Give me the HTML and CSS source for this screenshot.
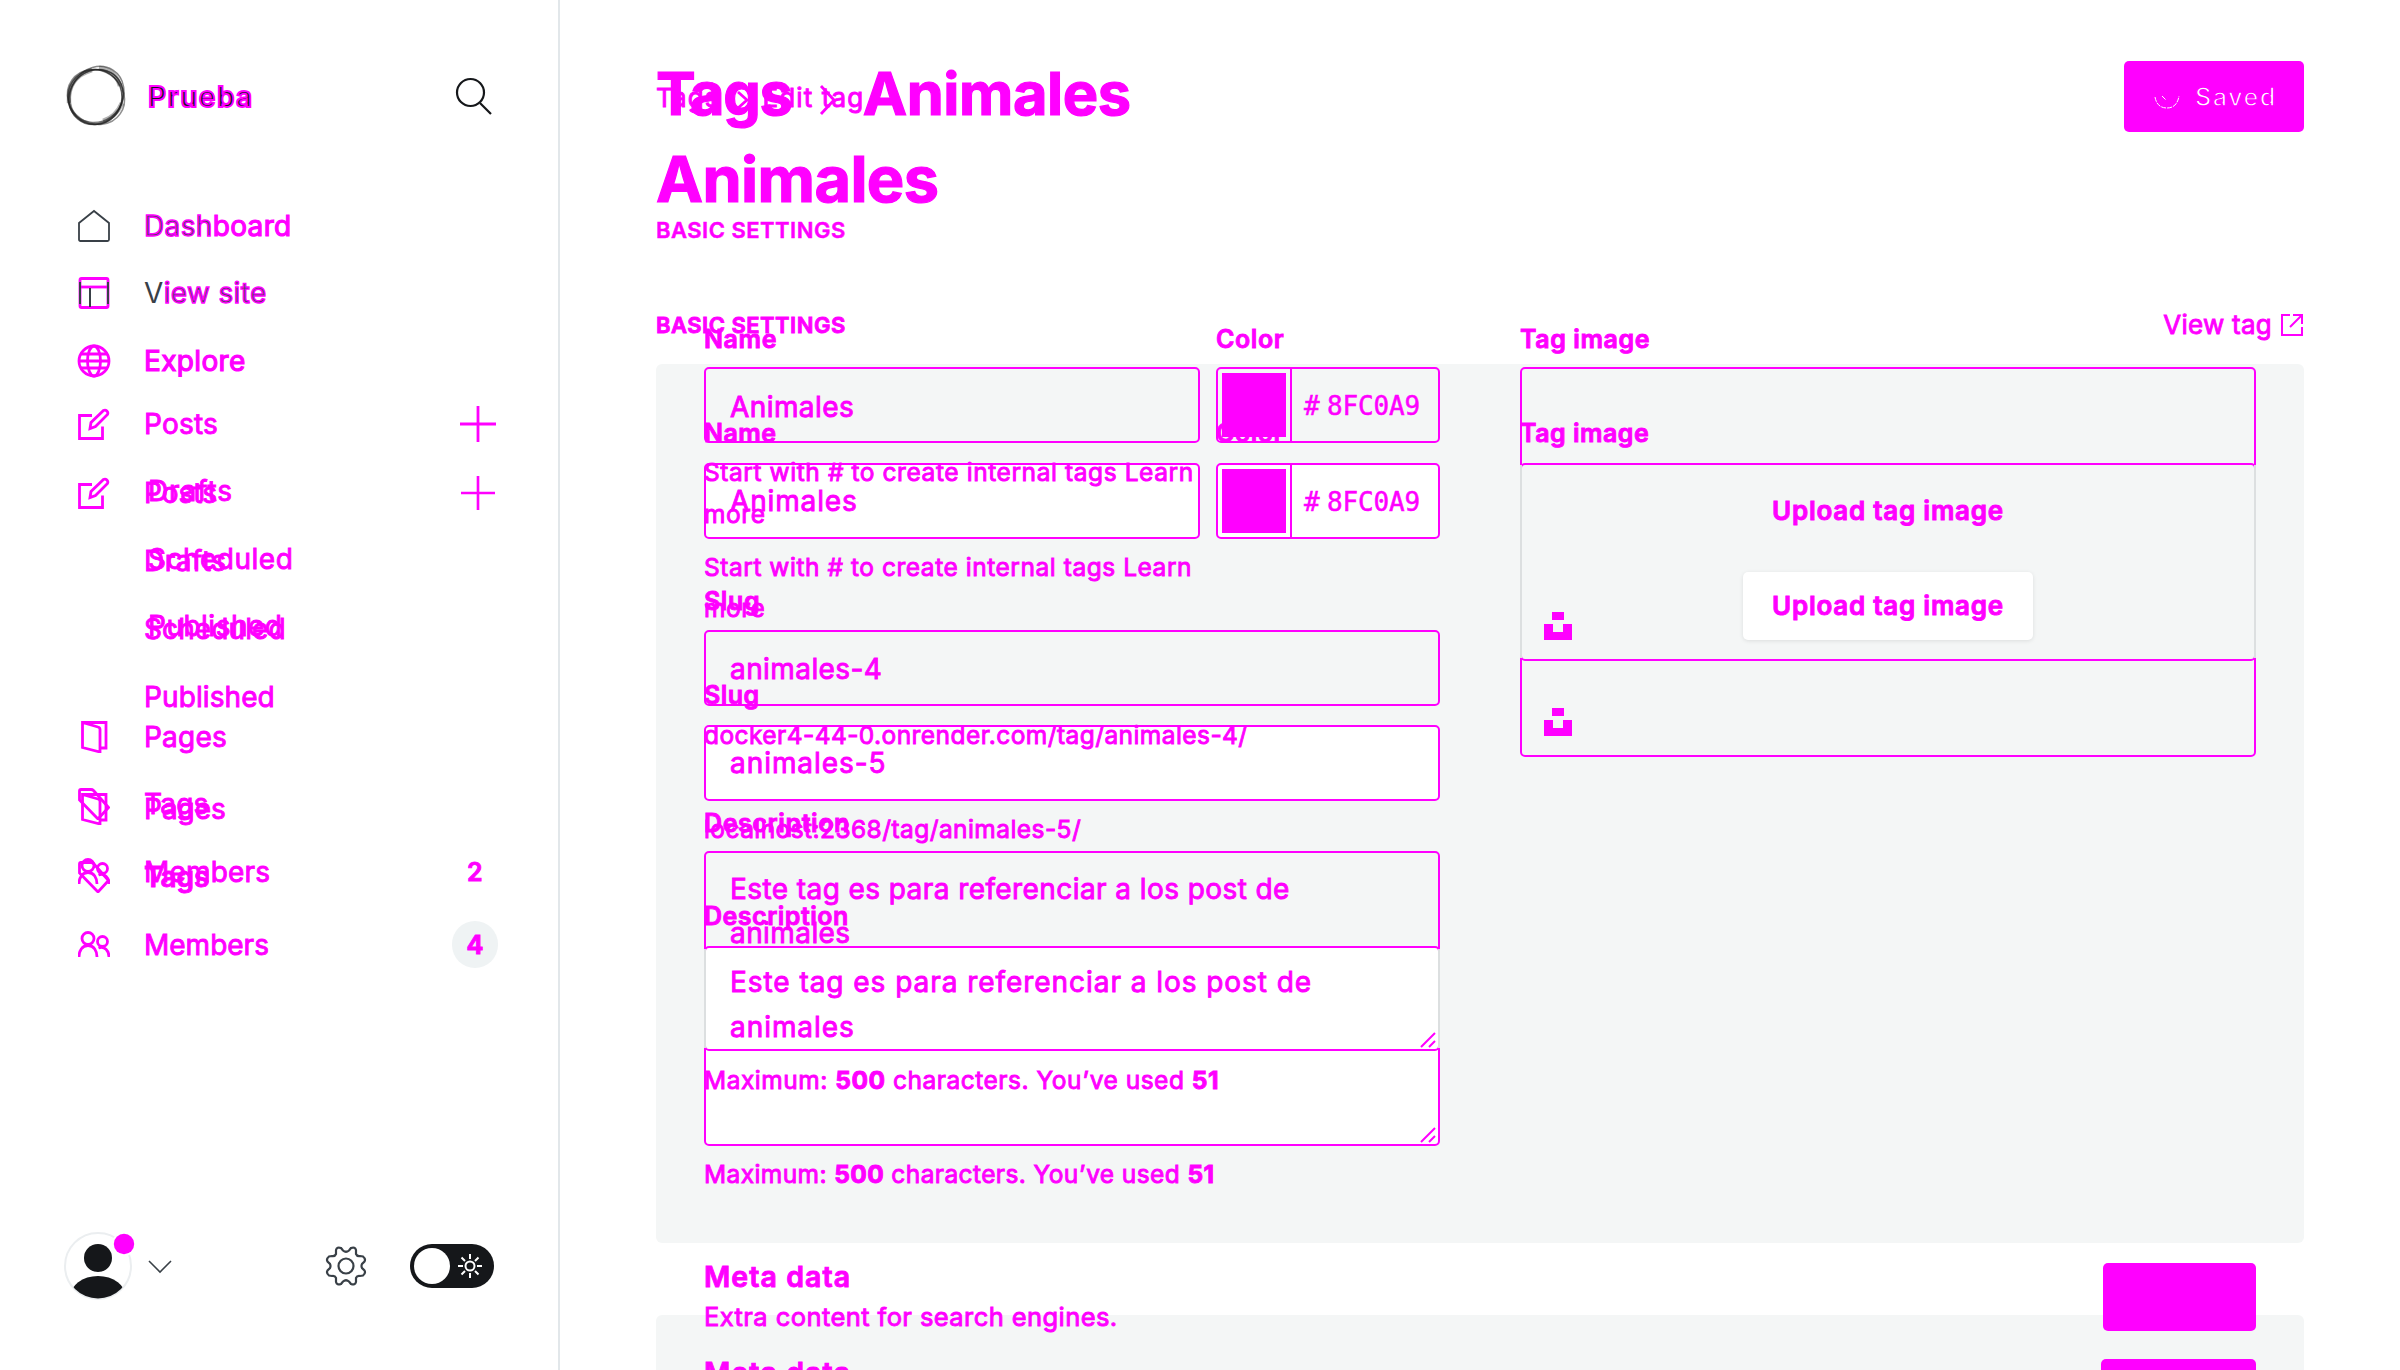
FILE: index.html
```html
<!DOCTYPE html>
<html lang="en">
<head>
<meta charset="utf-8">
<title>Prueba - Tags - Animales</title>
<link rel="stylesheet" href="styles.css">
</head>
<body>
<svg class="defs" aria-hidden="true">
  <symbol id="posts" viewBox="0 0 32 32"><path d="M14 7.5H1.5v23h23V18.500M25.500 2.500a3 3 0 0 1 4 4L17.500 18.500l-5.500 2 1-6z"/></symbol>
  <symbol id="pages" viewBox="0 0 32 32"><path d="M4.500 1.500h23.500v25.500h-6M4.500 1.500v25l17.500 4.500V8.500q0-2-2-2.500z"/></symbol>
  <symbol id="tags" viewBox="0 0 32 32"><path d="M1.500 12V3q0-1.500 1.500-1.500h10q1.500 0 2.500 1L30.500 19.500 20 31 3 13.500z"/></symbol>
  <symbol id="members" viewBox="0 0 32 32"><circle cx="10" cy="9.500" r="6"/><circle cx="24.500" cy="12.500" r="5"/><path d="M1 28c0-6 3-11.500 9-11.500s9 5.500 9 11.500M20.500 19c6-2.500 10.500 3 10.500 9"/></symbol>
  <symbol id="plus" viewBox="0 0 36 36"><path d="M18 0v36M0 18h36"/></symbol>
  <symbol id="unsplash" viewBox="0 0 28 28"><path d="M8 0h12v8H8zM0 12h9v8h10v-8h9v16H0z"/></symbol>
  <symbol id="grip" viewBox="0 0 16 16"><path d="M1 15 15 1M9 15l6-6"/></symbol>
</svg>

<aside class="sidebar">
  <div class="layer brand">
    <svg class="logo" viewBox="0 0 62 62"><g fill="none" stroke="#222"><ellipse cx="30" cy="32" rx="27" ry="27.500" stroke-width="1.600" opacity=".75"/><ellipse cx="31" cy="32" rx="28.500" ry="26" transform="rotate(-50 31 32)" stroke-width="1.500" opacity=".6"/><ellipse cx="32" cy="30" rx="29.500" ry="26" transform="rotate(-58 32 30)" stroke-width="1.500" opacity=".55"/><ellipse cx="31" cy="32" rx="29.500" ry="26.500" transform="rotate(35 31 32)" stroke-width="1.500" opacity=".5"/><ellipse cx="31" cy="31" rx="28" ry="25.500" transform="rotate(-35 31 31)" stroke-width="1.200" opacity=".6"/><path d="M4 38Q2 12 27 5M34 3q16 1 21 18M57 38q-6 14-19 18" stroke-width="4.500" opacity=".35"/></g></svg>
    <span class="site-name">Prueba</span>
    <svg class="search" viewBox="0 0 38 38"><circle cx="15.500" cy="15.500" r="13.500"/><path d="M25 26l11 11"/></svg>
  </div>

  <nav class="layer nav-shared">
    <div class="row"><svg class="icon dark" viewBox="0 0 32 32"><path d="M1 13 16 1l15 12v16.500q0 1.500-1.500 1.500h-27Q1 31 1 29.500z"/></svg><span class="link"><span class="edged">Dash</span><span class="hot">board</span></span></div>
    <div class="row"><svg class="icon" viewBox="0 0 32 32"><rect x="2" y="1.500" width="28" height="29" rx="1.500"/><path d="M2 10h28"/><path d="M12 11v19M2 5v22M30 5v22" stroke="#394047" stroke-width="2"/></svg><span class="link"><span class="plain">V</span><span class="edged">iew site</span></span></div>
    <div class="row"><svg class="icon" viewBox="0 0 32 32"><circle cx="16" cy="16" r="15"/><ellipse cx="16" cy="16" rx="6.500" ry="15"/><path d="M1 16h30M3 9h26M3 23h26"/></svg><span class="link hot">Explore</span></div>
  </nav>

  <nav class="layer nav-b">
    <div class="row"><svg class="icon"><use href="#posts"/></svg><span class="link">Posts</span><svg class="plus small"><use href="#plus"/></svg></div>
    <div class="row sub drafts">Drafts</div>
    <div class="row sub">Scheduled</div>
    <div class="row sub">Published</div>
    <div class="row next"><svg class="icon"><use href="#pages"/></svg><span class="link">Pages</span></div>
    <div class="row"><svg class="icon"><use href="#tags"/></svg><span class="link strong">Tags</span></div>
    <div class="row"><svg class="icon"><use href="#members"/></svg><span class="link">Members</span><span class="count pill">4</span></div>
  </nav>

  <nav class="layer nav-a">
    <div class="row"><svg class="icon"><use href="#posts"/></svg><span class="link">Posts</span><svg class="plus"><use href="#plus"/></svg></div>
    <div class="row sub drafts">Drafts</div>
    <div class="row sub">Scheduled</div>
    <div class="row sub">Published</div>
    <div class="row next"><svg class="icon"><use href="#pages"/></svg><span class="link">Pages</span></div>
    <div class="row"><svg class="icon"><use href="#tags"/></svg><span class="link">Tags</span></div>
    <div class="row"><svg class="icon"><use href="#members"/></svg><span class="link">Members</span><span class="count">2</span></div>
  </nav>

  <div class="layer user-bar">
    <svg class="avatar" viewBox="0 0 72 70"><defs><clipPath id="face"><circle cx="34" cy="36" r="32.500"/></clipPath></defs><circle cx="34" cy="36" r="33" fill="#fff" stroke="#ebeef0" stroke-width="2"/><circle cx="34" cy="28" r="14" fill="#15171a" stroke="none"/><ellipse cx="34" cy="67" rx="28" ry="21" fill="#15171a" stroke="none" clip-path="url(#face)"/><circle cx="60" cy="14" r="12" fill="#fff" stroke="none"/><circle cx="60" cy="14" r="10.200" fill="#f0f" stroke="none"/></svg>
    <svg class="chevron" viewBox="0 0 24 13"><path d="M1 1l11 11L23 1"/></svg>
    <svg class="gear" viewBox="0 0 40 40"><circle cx="20" cy="20" r="7.500"/><path d="M17 4.500Q20 7 23 4.500L25 2Q29 .500 30 4V8Q31 10.500 34 10L37 10.500Q40 13 38.500 15.500L36 18Q35 20 36 22L38.500 24.500Q40 27 37 29.500L34 30Q31 29.500 30 32V36Q29 39.500 25 38L23 35.500Q20 33 17 35.500L15 38Q11 39.500 10 36V32Q9 29.500 6 30L3 29.500Q0 27 1.500 24.500L4 22Q5 20 4 18L1.500 15.500Q0 13 3 10.500L6 10Q9 10.500 10 8V4Q11 .500 15 2Z"/></svg>
    <div class="toggle"><span class="knob"></span><svg class="sun" viewBox="0 0 24 24"><circle cx="12" cy="12" r="4.500"/><path d="M12 0v5M12 19v5M0 12h5M19 12h5M3.500 3.500 7 7M17 17l3.500 3.500M20.500 3.500 17 7M7 17l-3.500 3.500"/></svg></div>
  </div>
</aside>

<main class="main">
  <section class="layer state-b">
    <div class="crumbs"><span>Tags</span><svg class="crumb-arrow" viewBox="0 0 14 18"><path d="M2 1l9 8-9 8"/></svg><span>Edit tag</span></div>
    <h1 class="title">Animales</h1>
    <div class="section-head"><h4 class="section-title">Basic settings</h4><a class="view-tag">View tag<svg class="ext" viewBox="0 0 22 22"><path d="M9 1H1v20h20v-8M12 1h9v9M21 1 9 13"/></svg></a></div>
    <div class="panel columns">
      <div class="col">
        <div class="pair">
          <div class="name-col"><div class="label">Name</div><div class="input name">Animales</div><p class="hint start">Start with # to create internal tags Learn<br>more</p></div>
          <div class="color-col"><div class="label">Color</div><div class="input color"><span class="swatch"></span><span class="hash">#</span><span class="hex">8FC0A9</span></div></div>
        </div>
        <div class="field"><div class="label">Slug</div><div class="input slug">animales-5</div><p class="hint url">localhost:2368/tag/animales-5/</p></div>
        <div class="field"><div class="label desc">Description</div><div class="input area">Este tag es para referenciar a los post de<br>animales<svg class="grip"><use href="#grip"/></svg></div><p class="hint max">Maximum: <b>500</b> characters. You’ve used <b>51</b></p></div>
      </div>
      <div class="col">
        <div class="label image">Tag image</div>
        <div class="upload"><span class="upload-btn">Upload tag image</span><svg class="unsplash"><use href="#unsplash"/></svg></div>
      </div>
    </div>
    <div class="panel meta"><div class="meta-title">Meta data</div><div class="expand"></div></div>
  </section>

  <section class="layer state-a">
    <h1 class="title"><span class="parent">Tags</span><svg class="title-arrow" viewBox="0 0 18 30"><path d="M2 1l13 14L2 29"/></svg><span>Animales</span></h1>
    <h4 class="section-title">Basic settings</h4>
    <div class="columns form">
      <div class="col">
        <div class="pair">
          <div class="name-col"><div class="label">Name</div><div class="input name">Animales</div><p class="hint start">Start with # to create internal tags Learn<br>more</p></div>
          <div class="color-col"><div class="label">Color</div><div class="input color"><span class="swatch"></span><span class="hash">#</span><span class="hex">8FC0A9</span></div></div>
        </div>
        <div class="field"><div class="label">Slug</div><div class="input slug">animales-4</div><p class="hint url">docker4-44-0.onrender.com/tag/animales-4/</p></div>
        <div class="field"><div class="label desc">Description</div><div class="input area common">Este tag es para referenciar a los post de<br>animales<svg class="grip"><use href="#grip"/></svg></div><p class="hint max">Maximum: <b>500</b> characters. You’ve used <b>51</b></p></div>
      </div>
      <div class="col">
        <div class="label image">Tag image</div>
        <div class="upload common"><span class="upload-btn">Upload tag image</span><svg class="unsplash"><use href="#unsplash"/></svg></div>
      </div>
    </div>
    <div class="meta"><div><div class="meta-title">Meta data</div><div class="meta-text">Extra content for search engines.</div></div><div class="expand"></div></div>
  </section>

  <div class="layer actions"><div class="save"><svg class="check" viewBox="0 0 26 14"><path d="M1 1q2 11 12 11T25 0M8 0l4 4"/></svg><span>Saved</span></div></div>
</main>
</body>
</html>
```
FILE: styles.css
```css
* { box-sizing: border-box; }
body {
  margin: 0;
  height: 1370px;
  display: flex;
  overflow: hidden;
  background: #fff;
  color: #f0f;
  font: 400 28px/30px Inter, "Liberation Sans", sans-serif;
  white-space: nowrap;
  -webkit-text-stroke: .9px #f0f;
}
h1, h4, p { margin: 0; font: inherit; }
svg { display: block; fill: none; stroke: #f0f; stroke-width: 2.8; flex: none; overflow: visible; }
.defs { position: absolute; width: 0; height: 0; }
.layer { grid-area: 1 / 1; min-width: 0; }

/* Sidebar */
.sidebar { width: 560px; height: 1370px; flex: none; display: grid; align-items: start; border-right: 2px solid #e2e7ea; }
.brand { display: flex; align-items: center; padding: 65px 0 0 65px; }
.logo { width: 62px; height: 62px; }
.site-name { margin: 2px 0 0 21px; width: 307px; font-weight: 600; font-size: 28px; letter-spacing: 1.5px; color: #15171a; -webkit-text-stroke: 2px #f0f; }
.search { width: 38px; height: 38px; stroke: #15171a; stroke-width: 2.2; }
.row { display: flex; align-items: center; padding: 0 60px 0 78px; }
.icon { width: 32px; height: 32px; }
.icon.dark { stroke: #394047; stroke-width: 1.8; }
.link { margin-left: 34px; flex: 1; }
.edged { color: #394047; -webkit-text-stroke: 1.4px #f0f; }
.plain { color: #394047; -webkit-text-stroke: 0; }
.hot { -webkit-text-stroke: 1.2px #f0f; }
.strong { font-weight: 600; }
.nav-shared { padding-top: 192px; letter-spacing: .35px; }
.nav-shared .row { height: 67.5px; }
.nav-a { padding-top: 390px; letter-spacing: .2px; }
.nav-a .row { height: 67.5px; }
.nav-a .sub { padding-left: 148px; letter-spacing: .5px; }
.nav-a .drafts { letter-spacing: .9px; }
.nav-b { padding-top: 458.5px; letter-spacing: 0; }
.nav-b .row { height: 68px; }
.nav-b .sub { padding-left: 144px; letter-spacing: .1px; }
.nav-b .drafts { letter-spacing: .5px; }
.nav-a .next { margin-top: 43px; }
.nav-b .next { margin-top: 44px; }
.plus { width: 36px; height: 36px; margin-right: 2px; }
.plus.small { width: 34px; height: 34px; margin-right: 3px; }
.count { width: 46px; text-align: center; font-weight: 600; font-size: 25px; }
.pill { height: 47px; line-height: 49px; border-radius: 24px; background: #eff3f4; font-weight: 700; }
.user-bar { display: flex; align-items: center; padding: 1232px 0 0 64px; }
.avatar { width: 72px; height: 70px; margin-top: -2px; }
.chevron { width: 24px; height: 13px; margin-left: 12px; stroke: #394047; stroke-width: 1.6; }
.gear { width: 40px; height: 40px; margin-left: 154px; stroke: #394047; stroke-width: 2.2; }
.toggle { width: 84px; height: 44px; margin-left: 44px; padding: 0 12px 0 4px; border-radius: 22px; background: #15171a; display: flex; align-items: center; justify-content: space-between; }
.knob { width: 36px; height: 36px; border-radius: 50%; background: #fff; }
.sun { width: 24px; height: 24px; stroke: #fff; stroke-width: 2; }

/* Main area */
.main { flex: 1; height: 1370px; overflow: hidden; display: grid; align-items: start; }
.state-a, .state-b { width: 1744px; padding-left: 96px; }
.state-a { padding-top: 63px; z-index: 1; }
.state-b { padding-top: 83px; }
.title { font-weight: 700; -webkit-text-stroke: 1.2px #f0f; }
.state-a .title { display: flex; align-items: center; height: 60px; font-size: 59.5px; line-height: 60px; letter-spacing: -.4px; }
.state-a .parent { letter-spacing: -1.3px; }
.title-arrow { width: 18px; height: 30px; margin: 13px 26px 0 27px; }
.state-b .title { margin-top: 31px; font-size: 63px; line-height: 70px; letter-spacing: -.6px; }
.crumbs { display: flex; align-items: center; height: 30px; font-size: 26px; letter-spacing: 1.1px; }
.crumb-arrow { width: 14px; height: 18px; margin: 4px 13px 0 16px; }
.section-title { font-weight: 600; font-size: 22px; text-transform: uppercase; letter-spacing: .5px; }
.state-a .section-title { margin-top: 92px; -webkit-text-stroke: .5px #f0f; }
.section-head { display: flex; justify-content: space-between; margin-top: 96px; }
.view-tag { display: flex; align-items: center; gap: 9px; font-size: 26px; letter-spacing: .25px; }
.ext { width: 22px; height: 22px; margin-right: 1px; stroke-width: 2; }
.columns { display: flex; gap: 80px; padding: 0 48px; }
.form { margin-top: 78.5px; height: 939.5px; }
.panel { background: #f4f6f6; border-radius: 6px; }
.panel.columns { margin-top: 24px; padding-top: 53.5px; height: 879px; }
.col { width: 736px; flex: none; }
.pair { display: flex; gap: 16px; }
.name-col { width: 496px; }
.color-col { width: 224px; }
.label { font-weight: 600; font-size: 25px; height: 43.5px; letter-spacing: .6px; }
.state-b .label { height: 45.5px; letter-spacing: .5px; }
.input { height: 76px; border: 2px solid #f0f; border-radius: 5px; padding: 22.500px 0 0 24px; letter-spacing: .42px; }
.state-b .input { background: #fff; padding-top: 21px; letter-spacing: .95px; }
.state-b .name { letter-spacing: .85px; }
.input.color, .state-b .input.color { display: flex; align-items: center; padding: 0 0 0 4px; font: 26px/30px "DejaVu Sans Mono", "Liberation Mono", monospace; letter-spacing: -.15px; -webkit-text-stroke: .5px #f0f; }
.swatch { width: 64px; height: 64px; background: #f0f; }
.hash { margin-left: 4px; padding-left: 12px; border-left: 2px solid #f0f; line-height: 74px; height: 72px; width: 37px; }
.hex { padding-top: 2px; }
.hint { font-size: 24.5px; line-height: 41.5px; margin-top: 9.2px; }
.state-b .hint { line-height: 41px; margin-top: 7.7px; }
.start { letter-spacing: .58px; }
.state-b .start { letter-spacing: .54px; }
.url { letter-spacing: .43px; }
.max { letter-spacing: .52px; }
.state-b .max { letter-spacing: .4px; }
.hint b { font-weight: 700; }
.field { margin-top: 51.2px; }
.state-b .field { margin-top: 51px; }
.input.area { position: relative; height: 200px; padding-top: 13.5px; line-height: 44.7px; }
.state-b .input.area { padding-top: 12px; line-height: 45px; }
.grip { position: absolute; right: 2px; bottom: 1px; width: 16px; height: 16px; stroke-width: 2; }
/* Side edges of the stretch where both boxes coincide */
.common::after { content: ""; position: absolute; left: -2px; right: -2px; top: 96px; bottom: 1px; border: solid #dcdfe0; border-width: 0 2px; }
.upload { position: relative; height: 294px; border: 2px solid #f0f; border-radius: 5px; display: flex; align-items: center; justify-content: center; font-weight: 600; font-size: 26px; letter-spacing: .75px; }
.upload-btn { width: 290px; height: 68px; line-height: 68px; text-align: center; border-radius: 5px; }
.state-b .upload-btn { background: #fff; box-shadow: 0 1px 4px rgba(0, 0, 0, .1); margin-top: -8px; }
.state-a .upload-btn { margin-top: -6px; }
.unsplash { position: absolute; left: 22px; bottom: 19px; width: 28px; height: 28px; fill: #f0f; stroke: none; }
.meta { display: flex; justify-content: space-between; padding: 0 48px; }
.meta-title { font-weight: 600; font-size: 28.5px; line-height: 27px; letter-spacing: 1.05px; }
.meta-text { font-size: 25.5px; line-height: 54px; letter-spacing: .42px; }
.expand { width: 153px; height: 68px; border-radius: 5px; background: #f0f; }
.panel.meta { margin-top: 72px; padding-top: 44px; height: 200px; }
.state-b .expand { width: 155px; }
.actions { display: flex; justify-content: flex-end; padding: 61px 96px 0 0; z-index: 2; }
.save { width: 180px; height: 71px; border-radius: 5px; background: #f0f; display: flex; align-items: center; padding-left: 30px; font-weight: 600; font-size: 25px; color: #fff; -webkit-text-stroke: 1.4px #f0f; }
.save span { margin-left: 15px; letter-spacing: 1.4px; }
.check { width: 26px; height: 14px; margin-top: 12px; stroke: #fff; stroke-width: 1; stroke-dasharray: 5 1; }
```
